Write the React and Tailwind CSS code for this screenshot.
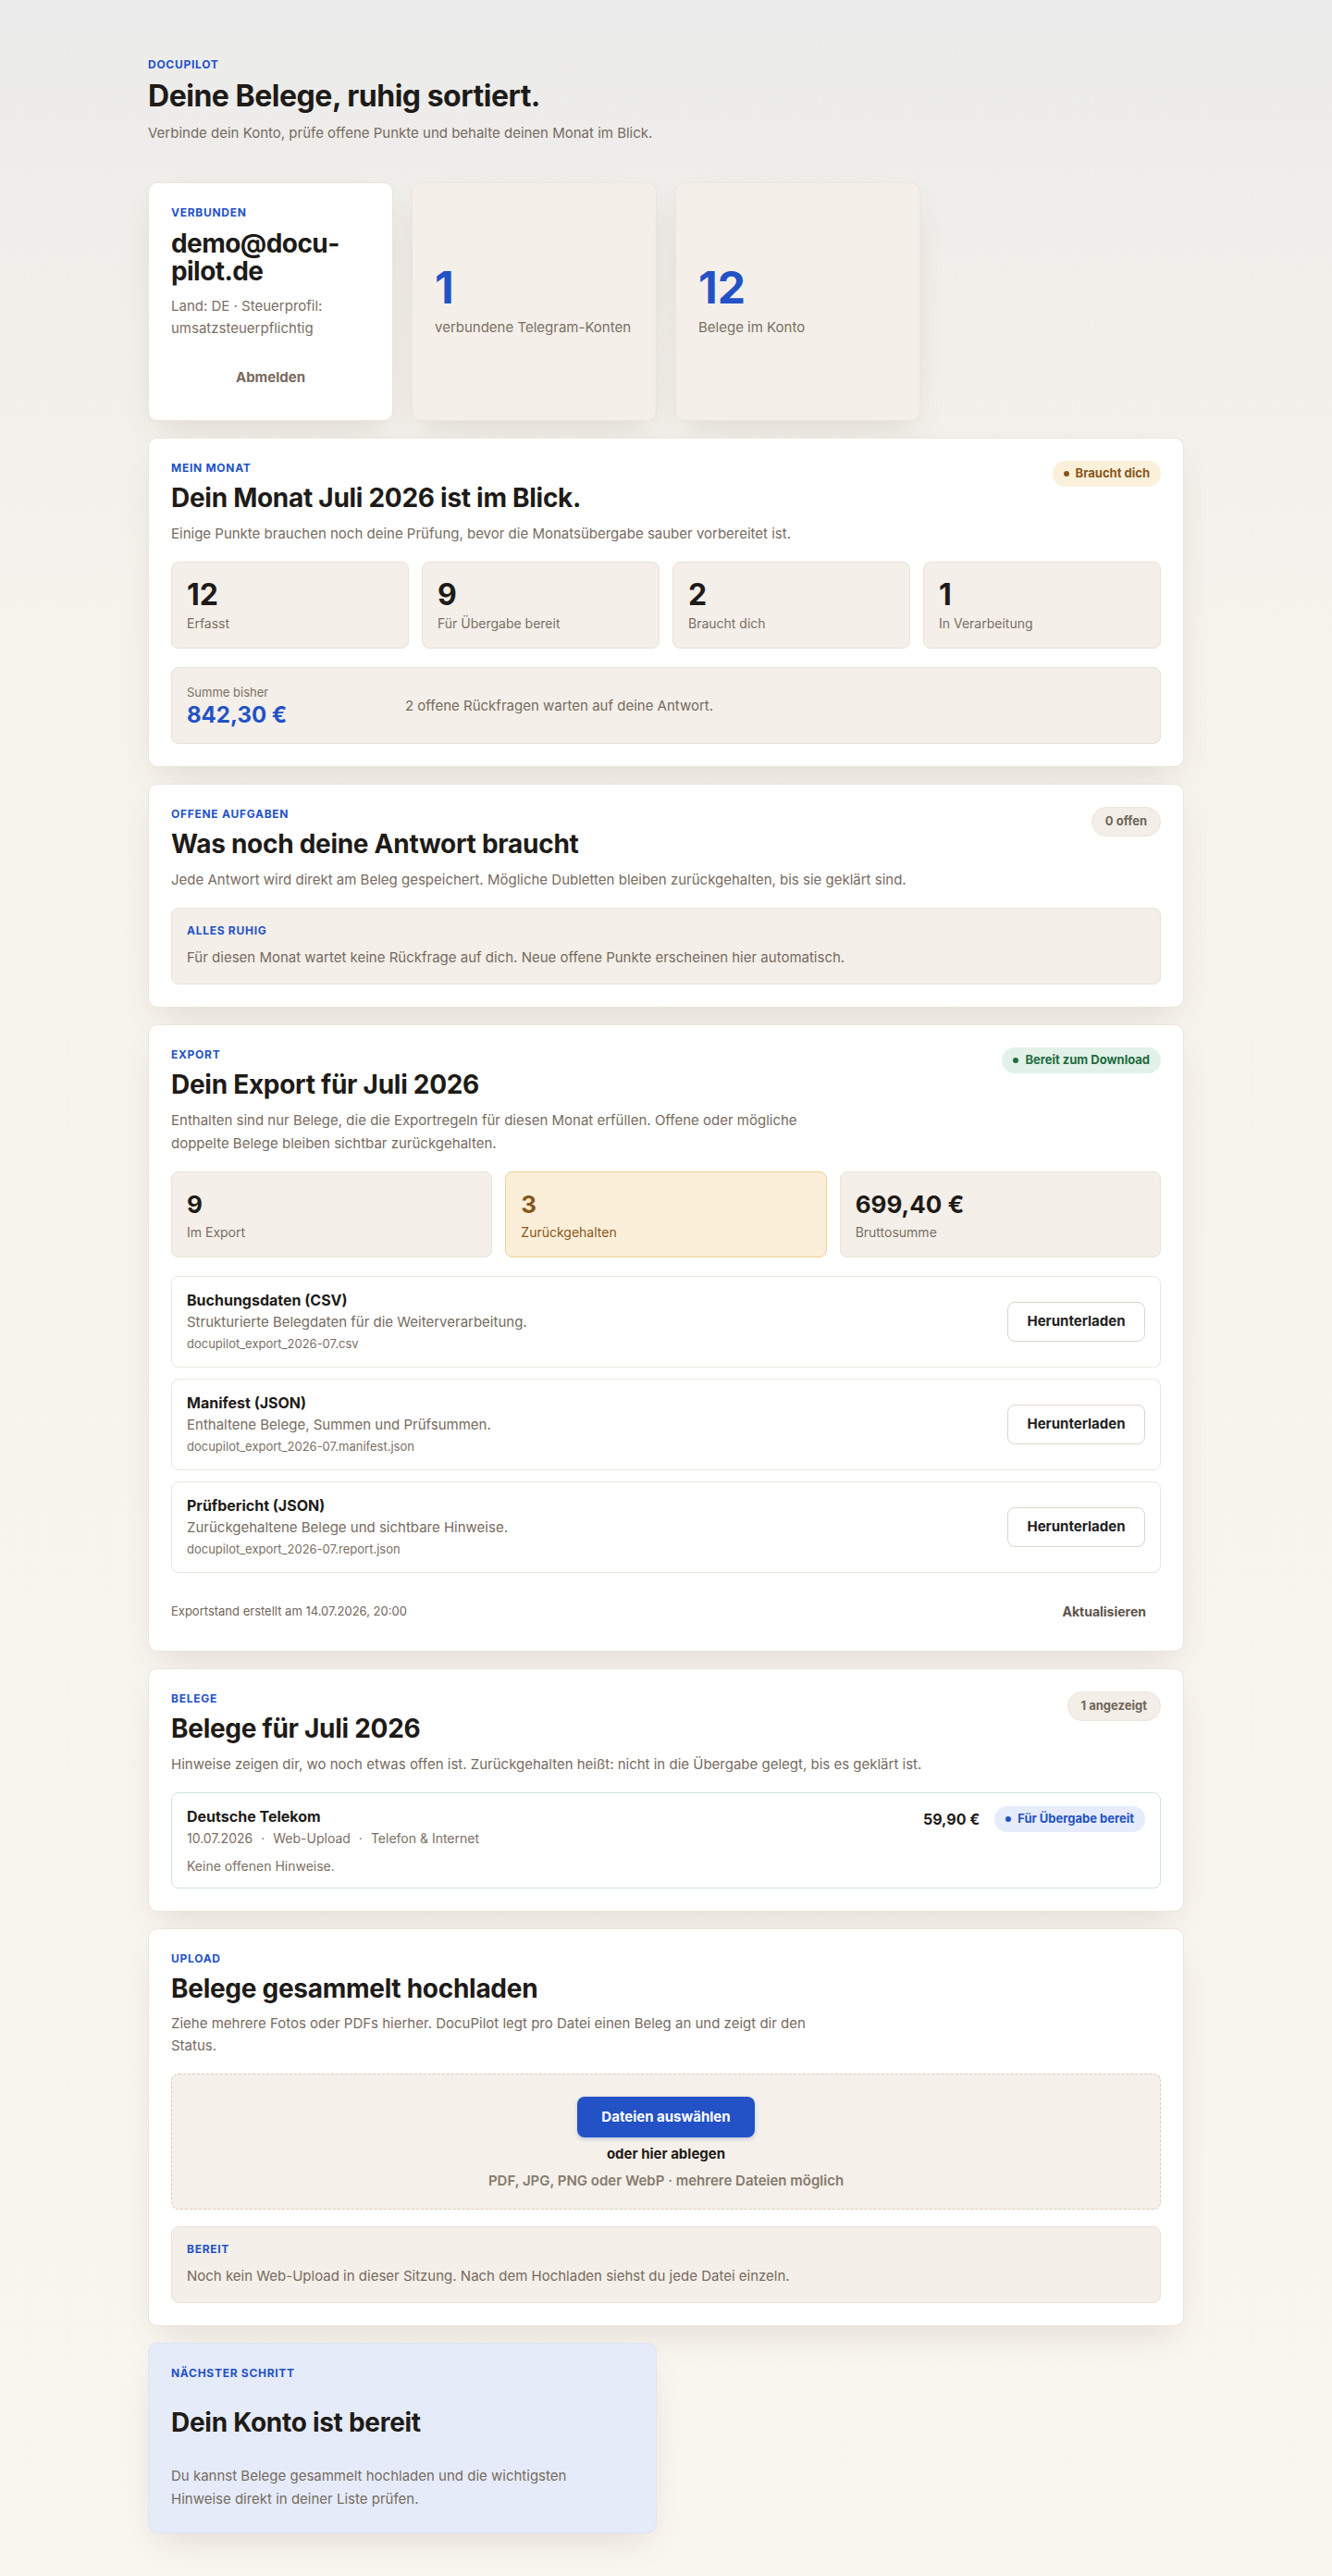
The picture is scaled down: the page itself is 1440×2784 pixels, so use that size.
import React from "react";

function Label({ children }) {
  return (
    <div className="text-[12px] leading-4 font-bold tracking-[0.06em] text-[#2352c6]">
      {children}
    </div>
  );
}

function StatusPill({ tone, children }) {
  const tones = {
    amber: "bg-[#fbf0da] text-[#87561a]",
    green: "bg-[#e2f2e8] text-[#1f6a41]",
    blue: "bg-[#e6ecfb] text-[#2352c6]",
  };
  return (
    <span
      className={
        "inline-flex h-[28px] shrink-0 items-center gap-[7px] rounded-full px-3 text-[13px] font-bold " +
        tones[tone]
      }
    >
      <span className="h-[6px] w-[6px] rounded-full bg-current" />
      {children}
    </span>
  );
}

function CountPill({ children }) {
  return (
    <span className="inline-flex h-8 shrink-0 items-center rounded-full border border-[#ece5db] bg-[#f3eee7] px-[14px] text-[13px] font-bold text-[#6f655b]">
      {children}
    </span>
  );
}

function SectionHead({ label, title, desc, descClass = "leading-[25px]", right }) {
  return (
    <div className="flex items-start justify-between gap-6">
      <div>
        <Label>{label}</Label>
        <h2 className="mt-[7px] text-[28px] leading-[34px] font-bold tracking-[-0.01em] text-[#1e1b18]">
          {title}
        </h2>
        <p className={"mt-[9px] text-[15px] text-[#766b61] " + descClass}>{desc}</p>
      </div>
      {right}
    </div>
  );
}

const cardBase =
  "rounded-[10px] border border-[#ebe5dc] shadow-[0_16px_36px_-12px_rgba(90,70,40,0.16)]";

function MonthStat({ value, label }) {
  return (
    <div className="rounded-lg border border-[#e9e2d7] bg-[#f4efe8] p-4">
      <div className="text-[32px] leading-[38px] font-bold text-[#1e1b18]">{value}</div>
      <div className="mt-[2px] text-[14px] leading-5 text-[#7a6f65]">{label}</div>
    </div>
  );
}

function DownloadRow({ title, desc, file }) {
  return (
    <div className="flex items-center justify-between rounded-lg border border-[#ece6dd] bg-white px-4 py-[13px]">
      <div>
        <div className="text-[16px] leading-6 font-bold text-[#1e1b18]">{title}</div>
        <div className="text-[15px] leading-6 text-[#766b61]">{desc}</div>
        <div className="text-[13px] leading-[23px] text-[#7a6f65]">{file}</div>
      </div>
      <button className="h-[43px] w-[149px] rounded-lg border border-[#e0d5c7] bg-white text-[15px] font-bold text-[#222]">
        Herunterladen
      </button>
    </div>
  );
}

export default function App() {
  return (
    <div className="min-h-screen w-full bg-[linear-gradient(180deg,#ebebeb_0px,#f1efea_320px,#f6f3ed_700px,#f9f6f0_100%)] font-['Inter','Liberation_Sans',sans-serif] text-[#1e1b18] antialiased">
      <div className="mx-auto w-[1120px] pt-[62px] pb-[49px]">
        <header>
          <Label>DOCUPILOT</Label>
          <h1 className="mt-[7px] text-[32px] leading-[38px] font-bold tracking-[-0.015em] text-[#1e1b18]">
            Deine Belege, ruhig sortiert.
          </h1>
          <p className="mt-[9px] text-[15px] leading-6 text-[#766b61]">
            Verbinde dein Konto, prüfe offene Punkte und behalte deinen Monat im Blick.
          </p>
        </header>

        <div className="mt-[41px] grid grid-cols-4 gap-x-5 gap-y-[18px]">
          {/* Account card */}
          <div className={"flex flex-col bg-white p-6 " + cardBase}>
            <Label>VERBUNDEN</Label>
            <div className="mt-[10px] text-[28px] leading-[30px] font-bold tracking-[-0.02em] text-[#1e1b18]">
              {"demo@docu\u00ADpilot.de"}
            </div>
            <p className="mt-[11px] text-[15px] leading-6 text-[#7a6f65]">
              Land: DE · Steuerprofil: umsatzsteuerpflichtig
            </p>
            <button className="mt-5 h-[43px] w-full rounded-lg text-[15px] font-bold text-[#776a5c]">
              Abmelden
            </button>
          </div>

          <div className={"flex flex-col justify-center bg-[#f4efe8] p-6 " + cardBase}>
            <div className="text-[48px] leading-none font-bold text-[#2352c6]">1</div>
            <div className="mt-[7px] text-[15px] leading-6 text-[#7a6f65]">
              verbundene Telegram-Konten
            </div>
          </div>

          <div className={"flex flex-col justify-center bg-[#f4efe8] p-6 " + cardBase}>
            <div className="text-[48px] leading-none font-bold text-[#2352c6]">12</div>
            <div className="mt-[7px] text-[15px] leading-6 text-[#7a6f65]">Belege im Konto</div>
          </div>

          <div />

          {/* Mein Monat */}
          <section className={"col-span-4 bg-white p-6 " + cardBase}>
            <SectionHead
              label="MEIN MONAT"
              title="Dein Monat Juli 2026 ist im Blick."
              desc="Einige Punkte brauchen noch deine Prüfung, bevor die Monatsübergabe sauber vorbereitet ist."
              right={<StatusPill tone="amber">Braucht dich</StatusPill>}
            />
            <div className="mt-[18px] grid grid-cols-4 gap-[14px]">
              <MonthStat value="12" label="Erfasst" />
              <MonthStat value="9" label="Für Übergabe bereit" />
              <MonthStat value="2" label="Braucht dich" />
              <MonthStat value="1" label="In Verarbeitung" />
            </div>
            <div className="mt-5 grid grid-cols-[220px_1fr] items-center gap-4 rounded-lg border border-[#e9e2d7] bg-[#f4efe8] p-4">
              <div>
                <div className="text-[13px] leading-5 text-[#7a6f65]">Summe bisher</div>
                <div className="mt-px text-[24px] leading-7 font-bold text-[#2352c6]">842,30 €</div>
              </div>
              <div className="text-[15px] leading-6 text-[#766b61]">
                2 offene Rückfragen warten auf deine Antwort.
              </div>
            </div>
          </section>

          {/* Offene Aufgaben */}
          <section className={"col-span-4 bg-white p-6 " + cardBase}>
            <SectionHead
              label="OFFENE AUFGABEN"
              title="Was noch deine Antwort braucht"
              desc="Jede Antwort wird direkt am Beleg gespeichert. Mögliche Dubletten bleiben zurückgehalten, bis sie geklärt sind."
              right={<CountPill>0 offen</CountPill>}
            />
            <div className="mt-[18px] rounded-lg border border-[#e9e2d7] bg-[#f4efe8] p-4">
              <Label>ALLES RUHIG</Label>
              <p className="mt-[9px] text-[15px] leading-6 text-[#766b61]">
                Für diesen Monat wartet keine Rückfrage auf dich. Neue offene Punkte erscheinen hier automatisch.
              </p>
            </div>
          </section>

          {/* Export */}
          <section className={"col-span-4 bg-white px-6 pt-6 pb-[22px] " + cardBase}>
            <SectionHead
              label="EXPORT"
              title="Dein Export für Juli 2026"
              desc="Enthalten sind nur Belege, die die Exportregeln für diesen Monat erfüllen. Offene oder mögliche doppelte Belege bleiben sichtbar zurückgehalten."
              descClass="max-w-[720px] leading-[25px]"
              right={<StatusPill tone="green">Bereit zum Download</StatusPill>}
            />
            <div className="mt-[18px] grid grid-cols-3 gap-[14px]">
              <div className="rounded-lg border border-[#e9e2d7] bg-[#f4efe8] p-4">
                <div className="text-[26px] leading-[38px] font-bold text-[#1e1b18]">9</div>
                <div className="text-[14px] leading-[21px] text-[#7a6f65]">Im Export</div>
              </div>
              <div className="rounded-lg border border-[#efcf93] bg-[#fbefd9] p-4">
                <div className="text-[26px] leading-[38px] font-bold text-[#87561a]">3</div>
                <div className="text-[14px] leading-[21px] text-[#87561a]">Zurückgehalten</div>
              </div>
              <div className="rounded-lg border border-[#e9e2d7] bg-[#f4efe8] p-4">
                <div className="text-[26px] leading-[38px] font-bold text-[#1e1b18]">699,40 €</div>
                <div className="text-[14px] leading-[21px] text-[#7a6f65]">Bruttosumme</div>
              </div>
            </div>
            <div className="mt-5 flex flex-col gap-3">
              <DownloadRow
                title="Buchungsdaten (CSV)"
                desc="Strukturierte Belegdaten für die Weiterverarbeitung."
                file="docupilot_export_2026-07.csv"
              />
              <DownloadRow
                title="Manifest (JSON)"
                desc="Enthaltene Belege, Summen und Prüfsummen."
                file="docupilot_export_2026-07.manifest.json"
              />
              <DownloadRow
                title="Prüfbericht (JSON)"
                desc="Zurückgehaltene Belege und sichtbare Hinweise."
                file="docupilot_export_2026-07.report.json"
              />
            </div>
            <div className="mt-5 flex items-center justify-between">
              <div className="text-[13px] leading-5 text-[#6f655b]">
                Exportstand erstellt am 14.07.2026, 20:00
              </div>
              <button className="h-[42px] rounded-lg px-4 text-[14px] font-bold text-[#5d534a]">
                Aktualisieren
              </button>
            </div>
          </section>

          {/* Belege */}
          <section className={"col-span-4 bg-white p-6 " + cardBase}>
            <SectionHead
              label="BELEGE"
              title="Belege für Juli 2026"
              desc="Hinweise zeigen dir, wo noch etwas offen ist. Zurückgehalten heißt: nicht in die Übergabe gelegt, bis es geklärt ist."
              right={<CountPill>1 angezeigt</CountPill>}
            />
            <div className="mt-[18px] flex items-start justify-between rounded-lg border border-[#cfe5e2] bg-white px-4 py-[13px]">
              <div>
                <div className="text-[16px] leading-6 font-bold text-[#1e1b18]">Deutsche Telekom</div>
                <div className="flex items-center gap-[9px] text-[14px] leading-6 text-[#7a6f65]">
                  <span>10.07.2026</span>
                  <span>·</span>
                  <span>Web-Upload</span>
                  <span>·</span>
                  <span>Telefon &amp; Internet</span>
                </div>
                <div className="mt-2 text-[14px] leading-5 text-[#7a6f65]">Keine offenen Hinweise.</div>
              </div>
              <div className="flex items-center gap-4 pt-px">
                <div className="text-[16px] leading-6 font-bold text-[#1e1b18]">59,90 €</div>
                <StatusPill tone="blue">Für Übergabe bereit</StatusPill>
              </div>
            </div>
          </section>

          {/* Upload */}
          <section className={"col-span-4 bg-white p-6 " + cardBase}>
            <SectionHead
              label="UPLOAD"
              title="Belege gesammelt hochladen"
              desc="Ziehe mehrere Fotos oder PDFs hierher. DocuPilot legt pro Datei einen Beleg an und zeigt dir den Status."
              descClass="max-w-[720px] leading-6"
            />
            <div className="mt-[18px] flex flex-col items-center rounded-lg border border-dashed border-[#d9cebf] bg-[#f5f0e9] pt-6 pb-5">
              <button className="h-[44px] w-[192px] rounded-lg bg-[#2352c6] text-[15px] font-bold text-white shadow-[0_2px_4px_rgba(35,82,198,0.25)]">
                Dateien auswählen
              </button>
              <div className="mt-[6px] text-[15px] leading-6 font-bold text-[#1e1b18]">oder hier ablegen</div>
              <div className="mt-[7px] text-[15px] leading-5 font-semibold text-[#857a6e]">
                PDF, JPG, PNG oder WebP · mehrere Dateien möglich
              </div>
            </div>
            <div className="mt-[18px] rounded-lg border border-[#e9e2d7] bg-[#f4efe8] p-4">
              <Label>BEREIT</Label>
              <p className="mt-[9px] text-[15px] leading-6 text-[#766b61]">
                Noch kein Web-Upload in dieser Sitzung. Nach dem Hochladen siehst du jede Datei einzeln.
              </p>
            </div>
          </section>

          {/* Next step */}
          <div className="col-span-2 rounded-[10px] border border-[#dde4f4] bg-[#e5ebf9] p-6 shadow-[0_16px_36px_-12px_rgba(90,70,40,0.16)]">
            <Label>NÄCHSTER SCHRITT</Label>
            <h3 className="mt-7 text-[28px] leading-[34px] font-bold tracking-[-0.01em] text-[#1e1b18]">
              Dein Konto ist bereit
            </h3>
            <p className="mt-7 max-w-[450px] text-[15px] leading-[25px] text-[#766b61]">
              Du kannst Belege gesammelt hochladen und die wichtigsten Hinweise direkt in deiner Liste prüfen.
            </p>
          </div>
        </div>
      </div>
    </div>
  );
}
